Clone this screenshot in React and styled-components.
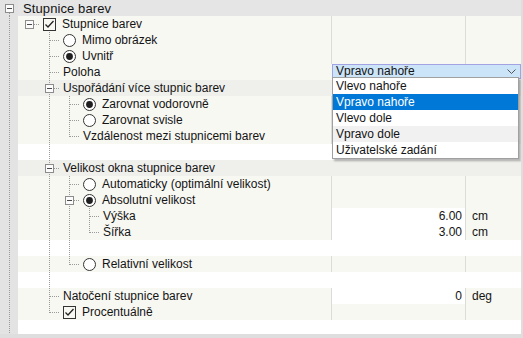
import React from 'react';
import styled, { createGlobalStyle } from 'styled-components';

const GlobalStyle = createGlobalStyle`
  html, body {
    margin: 0;
    padding: 0;
  }
  body {
    background: #dedede;
    font-family: "Liberation Sans", Arial, sans-serif;
    font-size: 12px;
    color: #141414;
  }
`;

const Panel = styled.div`
  position: relative;
  width: 521px;
  height: 334px;
  overflow: hidden;
  background: #fff;
`;

const HeaderRow = styled.div`
  display: flex;
  align-items: center;
  height: 16px;
  background: #e5e5e5;
  font-size: 13px;
  letter-spacing: 0.1px;
`;

const BG = { normal: '#f8f8f3', group: '#efefec', blank: '#ffffff' };

const Row = styled.div`
  display: flex;
  height: 16px;
  line-height: 16px;
  background: ${p => BG[p.$kind]};
`;

const LabelCell = styled.div`
  display: flex;
  align-items: center;
  width: 331px;
  flex-shrink: 0;
  overflow: hidden;
  white-space: nowrap;
`;

const Strip = styled.div`
  display: flex;
  width: 18px;
  height: 16px;
  flex-shrink: 0;
  background: #e3e3e3;
`;

const GuideSvg = styled.svg`
  display: block;
  flex-shrink: 0;
  overflow: visible;
`;

const IconBox = styled.span`
  display: flex;
  margin-left: 5px;
  flex-shrink: 0;
`;

const Label = styled.span`
  margin-left: ${p => (p.$afterIcon ? 6 : 5)}px;
`;

const ValueCell = styled.div`
  width: 134px;
  flex-shrink: 0;
  box-sizing: border-box;
  border-left: 1px solid ${p => (p.$lines ? '#dcdcd8' : 'transparent')};
  background: ${p => (p.$edit ? '#ffffff' : 'transparent')};
  text-align: right;
  padding-right: 3px;
`;

const UnitCell = styled.div`
  flex: 1;
  box-sizing: border-box;
  border-left: 1px solid ${p => (p.$lines ? '#dcdcd8' : 'transparent')};
  padding-left: 6px;
`;

const Combo = styled.div`
  flex: 1;
  display: flex;
  align-items: center;
  justify-content: space-between;
  margin-left: 1px;
  height: 15px;
  box-sizing: border-box;
  background: #cce4f7;
  border: 1px solid #a3a3e4;
  padding: 0 4px 0 3px;
  line-height: 13px;
`;

const DropList = styled.div`
  position: absolute;
  left: 332px;
  top: 77px;
  width: 187px;
  box-sizing: border-box;
  background: #fff;
  border: 1px solid #a0a0a0;
  box-shadow: 2px 2px 2px rgba(0, 0, 0, 0.3);
`;

const DropItem = styled.div`
  height: 16px;
  line-height: 16px;
  padding-left: 3px;
  background: ${p => (p.$selected ? '#0078d7' : p.$hover ? '#f1f1f1' : '#fff')};
  color: ${p => (p.$selected ? '#fff' : '#141414')};
`;

const DOT = { stroke: '#9a9a9a', strokeWidth: 1, strokeDasharray: '1 1' };

const GUIDE = {
  '': {},
  I: { up: 1, down: 1 },
  T: { up: 1, down: 1, right: 1 },
  L: { up: 1, right: 1 },
  TB: { up: 1, down: 1, right: 1, box: 1 },
  B: { right: 1, box: 1 },
  D: { down: 1, box: 1 }
};

const Guide = ({ type, c = 11, w = 20 }) => {
  const g = GUIDE[type];
  const x = c + 0.5;
  return (
    <GuideSvg width={w} height={16}>
      {g.up && <line x1={x} x2={x} y1={0} y2={g.down ? 16 : 9} {...DOT} />}
      {!g.up && g.down && <line x1={x} x2={x} y1={9} y2={16} {...DOT} />}
      {g.right && <line x1={c + 1} x2={c + 11} y1={8.5} y2={8.5} {...DOT} />}
      {g.box && (
        <>
          <rect x={c - 3.5} y={4.5} width={8} height={8} fill="#fbfbfb" stroke="#8c8c8c" />
          <line x1={c - 2} x2={c + 3} y1={8.5} y2={8.5} stroke="#4a4a4a" />
        </>
      )}
    </GuideSvg>
  );
};

const Check = () => (
  <svg width="13" height="13">
    <rect x="0.5" y="0.5" width="12" height="12" fill="none" stroke="#333" />
    <path d="M2.5 6.5 L5 9 L10.5 3" fill="none" stroke="#222" strokeWidth="1.3" />
  </svg>
);

const Radio = ({ on }) => (
  <svg width="13" height="13">
    <circle cx="6.5" cy="6.5" r="6" fill="#fff" stroke="#333" />
    {on && <circle cx="6.5" cy="6.5" r="3.4" fill="#1f1f1f" />}
  </svg>
);

const Chevron = () => (
  <svg width="9" height="5">
    <path d="M0.5 0.5 L4.5 4.5 L8.5 0.5" fill="none" stroke="#555" />
  </svg>
);

const ICONS = {
  check: <Check />,
  radio: <Radio />,
  radioOn: <Radio on />
};

const rows = [
  { g: ['B'], icon: 'check', text: 'Stupnice barev' },
  { g: ['', 'T'], icon: 'radio', text: 'Mimo obrázek' },
  { g: ['', 'T'], icon: 'radioOn', text: 'Uvnitř' },
  { g: ['', 'T'], text: 'Poloha', combo: 'Vpravo nahoře' },
  { g: ['', 'TB'], text: 'Uspořádání více stupnic barev', kind: 'group' },
  { g: ['', 'I', 'T'], icon: 'radioOn', text: 'Zarovnat vodorovně' },
  { g: ['', 'I', 'T'], icon: 'radio', text: 'Zarovnat svisle' },
  { g: ['', 'I', 'L'], text: 'Vzdálenost mezi stupnicemi barev' },
  { g: ['', 'I'], kind: 'blank' },
  { g: ['', 'TB'], text: 'Velikost okna stupnice barev', kind: 'group' },
  { g: ['', 'I', 'T'], icon: 'radio', text: 'Automaticky (optimální velikost)' },
  { g: ['', 'I', 'TB'], icon: 'radioOn', text: 'Absolutní velikost' },
  { g: ['', 'I', 'I', 'T'], text: 'Výška', value: '6.00', unit: 'cm' },
  { g: ['', 'I', 'I', 'L'], text: 'Šířka', value: '3.00', unit: 'cm' },
  { g: ['', 'I', 'I'], kind: 'blank' },
  { g: ['', 'I', 'L'], icon: 'radio', text: 'Relativní velikost' },
  { g: ['', 'I'], kind: 'blank' },
  { g: ['', 'T'], text: 'Natočení stupnice barev', value: '0', unit: 'deg' },
  { g: ['', 'L'], icon: 'check', text: 'Procentuálně' },
  { g: [], kind: 'blank' }
];

const options = ['Vlevo nahoře', 'Vpravo nahoře', 'Vlevo dole', 'Vpravo dole', 'Uživatelské zadání'];

const TreeRow = ({ row }) => {
  const kind = row.kind || 'normal';
  const lines = kind === 'normal';
  return (
    <Row $kind={kind}>
      <LabelCell>
        <Strip>
          <Guide type="I" c={9} w={18} />
        </Strip>
        {row.g.map((t, i) => (
          <Guide key={i} type={t} />
        ))}
        {row.icon && <IconBox>{ICONS[row.icon]}</IconBox>}
        {row.text && <Label $afterIcon={!!row.icon}>{row.text}</Label>}
      </LabelCell>
      {row.combo ? (
        <Combo>
          {row.combo}
          <Chevron />
        </Combo>
      ) : (
        <>
          <ValueCell $lines={lines} $edit={row.value !== undefined}>
            {row.value}
          </ValueCell>
          <UnitCell $lines={lines}>{row.unit}</UnitCell>
        </>
      )}
    </Row>
  );
};

const App = () => (
  <>
    <GlobalStyle />
    <Panel>
      <HeaderRow>
        <Strip>
          <Guide type="D" c={9} w={18} />
        </Strip>
        <Label>Stupnice barev</Label>
      </HeaderRow>
      {rows.map((row, i) => (
        <TreeRow key={i} row={row} />
      ))}
      <DropList>
        {options.map(o => (
          <DropItem key={o} $selected={o === 'Vpravo nahoře'} $hover={o === 'Vpravo dole'}>
            {o}
          </DropItem>
        ))}
      </DropList>
    </Panel>
  </>
);

export default App;
